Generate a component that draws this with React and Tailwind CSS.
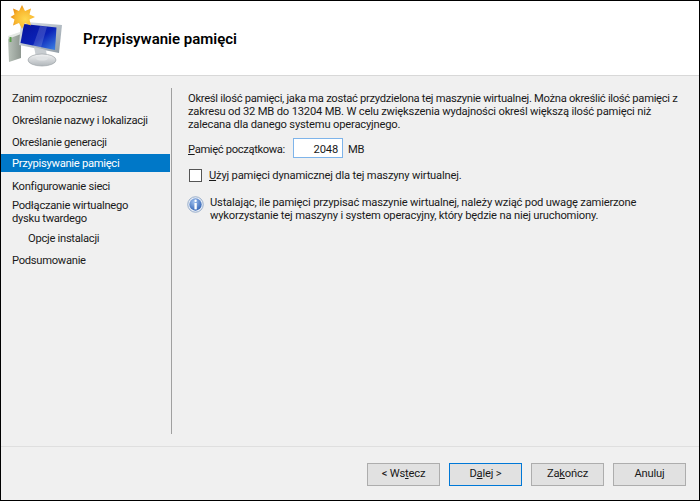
import React from 'react';

const font = { fontFamily: 'Roboto, sans-serif' };

// Wizard icon: monitor with star and tower
const WizardIcon = () => (
  <svg width="68" height="70" viewBox="1 1 68 70" className="shrink-0">
    <defs>
      <linearGradient id="screen" x1="0" y1="0" x2="1" y2="1">
        <stop offset="0" stopColor="#07129a" />
        <stop offset="0.55" stopColor="#0a22b8" />
        <stop offset="1" stopColor="#3f86e6" />
      </linearGradient>
      <linearGradient id="frame" x1="0" y1="0" x2="1" y2="1">
        <stop offset="0" stopColor="#dfe6ec" />
        <stop offset="1" stopColor="#8f9aa3" />
      </linearGradient>
      <linearGradient id="tower" x1="0" y1="0" x2="1" y2="0">
        <stop offset="0" stopColor="#b9c2ba" />
        <stop offset="1" stopColor="#8d968f" />
      </linearGradient>
      <linearGradient id="base" x1="0" y1="0" x2="0" y2="1">
        <stop offset="0" stopColor="#f2f3f4" />
        <stop offset="1" stopColor="#b0b6ba" />
      </linearGradient>
      <radialGradient id="star" cx="0.6" cy="0.6" r="0.6">
        <stop offset="0" stopColor="#ffd84f" />
        <stop offset="0.7" stopColor="#f8b52e" />
        <stop offset="1" stopColor="#e88f14" />
      </radialGradient>
    </defs>
    <path d="M8 38 L21 33 L21 58 L9 62 Z" fill="url(#tower)" />
    <path d="M8 36 L20 32 L21 34 L8 39 Z" fill="#e4e8e4" />
    <rect x="9.5" y="37" width="2" height="5" fill="#5aa04a" />
    <path d="M21 21.5 L62 25 L59 53 L19 45 Z" fill="url(#frame)" />
    <path d="M24 24 L56.5 27.5 L55 50 L20.5 43 Z" fill="url(#screen)" />
    <path d="M40 26 L47 26.7 L41 47.5 L33 46 Z" fill="#ffffff" opacity="0.16" />
    <path d="M34 47 L46 50 L47 57 L36 57 Z" fill="#c8cdd1" />
    <ellipse cx="42" cy="60" rx="14" ry="6" fill="url(#base)" stroke="#9ea4a8" strokeWidth="0.7" />
    <ellipse cx="42" cy="58.5" rx="6" ry="2" fill="#dfe2e4" />
    <path d="M22 5 L25 11 L31 8.5 L29.5 14.5 L35 17 L29.5 19.5 L31 25.5 L25 23 L22 29 L19 23 L13 25.5 L14.5 19.5 L10.5 17 L14.5 14.5 L13 8.5 L19 11 Z" fill="url(#star)" />
  </svg>
);

const InfoIcon = () => (
  <svg width="17" height="17" viewBox="0 0 16 16" className="shrink-0 ml-[-1px]">
    <defs>
      <radialGradient id="info" cx="0.4" cy="0.3" r="0.8">
        <stop offset="0" stopColor="#9fc0ee" />
        <stop offset="1" stopColor="#2a5cb0" />
      </radialGradient>
    </defs>
    <circle cx="8" cy="8" r="7.3" fill="#e8eef6" stroke="#8aa3c4" strokeWidth="0.8" />
    <circle cx="8" cy="8" r="5.8" fill="url(#info)" />
    <rect x="7" y="3.4" width="2.2" height="2.2" rx="1" fill="#ffffff" />
    <rect x="7" y="6.6" width="2.2" height="6" fill="#ffffff" />
  </svg>
);

const WizardButton = ({ pre, hot, post, focused }) => (
  <button
    className={`w-[73px] h-[23px] border flex items-center justify-center text-[11.2px] text-[#1a1a1a] bg-[#e1e1e1] ${
      focused ? 'border-[#0078d7]' : 'border-[#adadad]'
    }`}
  >
    {pre}
    <span className="underline">{hot}</span>
    {post}
  </button>
);

const NavItem = ({ children, active, sub }) => (
  <div
    className={`flex items-center pt-[2px] whitespace-nowrap ${sub ? 'pl-[27px]' : 'pl-[11px]'} ${
      active ? 'bg-[#0078c8] text-white h-[18px] mt-[1px] mb-[3px]' : 'h-[22px]'
    }`}
  >
    {children}
  </div>
);

const App = () => {
  return (
    <div className="w-[700px] h-[501px] border border-black bg-[#f0f0f0] flex flex-col text-[11.2px] tracking-[-0.19px] text-[#1a1a1a] overflow-hidden" style={font}>
      {/* Header */}
      <header className="h-[75px] bg-white border-b border-[#d8d8d8] flex shrink-0">
        <WizardIcon />
        <h1 className="ml-[14px] mt-[28px] text-[15px] tracking-normal font-semibold text-black leading-5 whitespace-nowrap">Przypisywanie pamięci</h1>
      </header>

      {/* Main */}
      <div className="flex-1 flex min-h-0">
        <nav className="w-[169px] pt-[11px] shrink-0 tracking-[-0.28px]">
          <NavItem>Zanim rozpoczniesz</NavItem>
          <NavItem>Określanie nazwy i lokalizacji</NavItem>
          <NavItem>Określanie generacji</NavItem>
          <NavItem active>Przypisywanie pamięci</NavItem>
          <NavItem>Konfigurowanie sieci</NavItem>
          <div className="pl-[11px] leading-[13px] pt-[2px] h-[30px] whitespace-nowrap">
            Podłączanie wirtualnego
            <br />
            dysku twardego
          </div>
          <NavItem sub>Opcje instalacji</NavItem>
          <NavItem>Podsumowanie</NavItem>
        </nav>
        <div className="mt-[12px] mb-[12px] ml-[1px] w-px bg-[#a0a0a0] shrink-0" />
        <main className="flex-1 pl-[16px] pr-[12px] pt-[16px] leading-[13px] whitespace-nowrap">
          <p>
            <span className="tracking-[-0.29px]">
              Określ ilość pamięci, jaka ma zostać przydzielona tej maszynie wirtualnej. Można określić ilość pamięci z
            </span>
            <br />
            zakresu od 32 MB do 13204 MB. W celu zwiększenia wydajności określ większą ilość pamięci niż
            <br />
            zalecana dla danego systemu operacyjnego.
          </p>
          <div className="flex items-center mt-[7px] h-[20px]">
            <span className="w-[105px] pt-[2px] tracking-[-0.35px]">
              <span className="underline">P</span>amięć początkowa:
            </span>
            <div className="w-[50px] h-[20px] bg-white border border-[#7eb4ea] flex items-center justify-end pr-[4px] pt-[2px]">2048</div>
            <span className="ml-[5px] pt-[2px]">MB</span>
          </div>
          <div className="flex items-center mt-[11px] h-[13px]">
            <span className="w-[13px] h-[13px] bg-white border border-[#555555] ml-[1px] shrink-0" />
            <span className="ml-[7px]">
              <span className="underline">U</span>żyj pamięci dynamicznej dla tej maszyny wirtualnej.
            </span>
          </div>
          <div className="flex items-start mt-[14px]">
            <InfoIcon />
            <p className="ml-[6px]">
              Ustalając, ile pamięci przypisać maszynie wirtualnej, należy wziąć pod uwagę zamierzone
              <br />
              wykorzystanie tej maszyny i system operacyjny, który będzie na niej uruchomiony.
            </p>
          </div>
        </main>
      </div>

      {/* Footer */}
      <footer className="h-[54px] border-t border-[#dfdfdf] flex justify-end items-start gap-[9px] pt-[16px] pr-[13px] shrink-0">
        <WizardButton pre="< Ws" hot="t" post="ecz" />
        <WizardButton pre="D" hot="a" post="lej >" focused />
        <WizardButton pre="Za" hot="k" post="ończ" />
        <WizardButton pre="Anuluj" hot="" post="" />
      </footer>
    </div>
  );
};

export default App;
